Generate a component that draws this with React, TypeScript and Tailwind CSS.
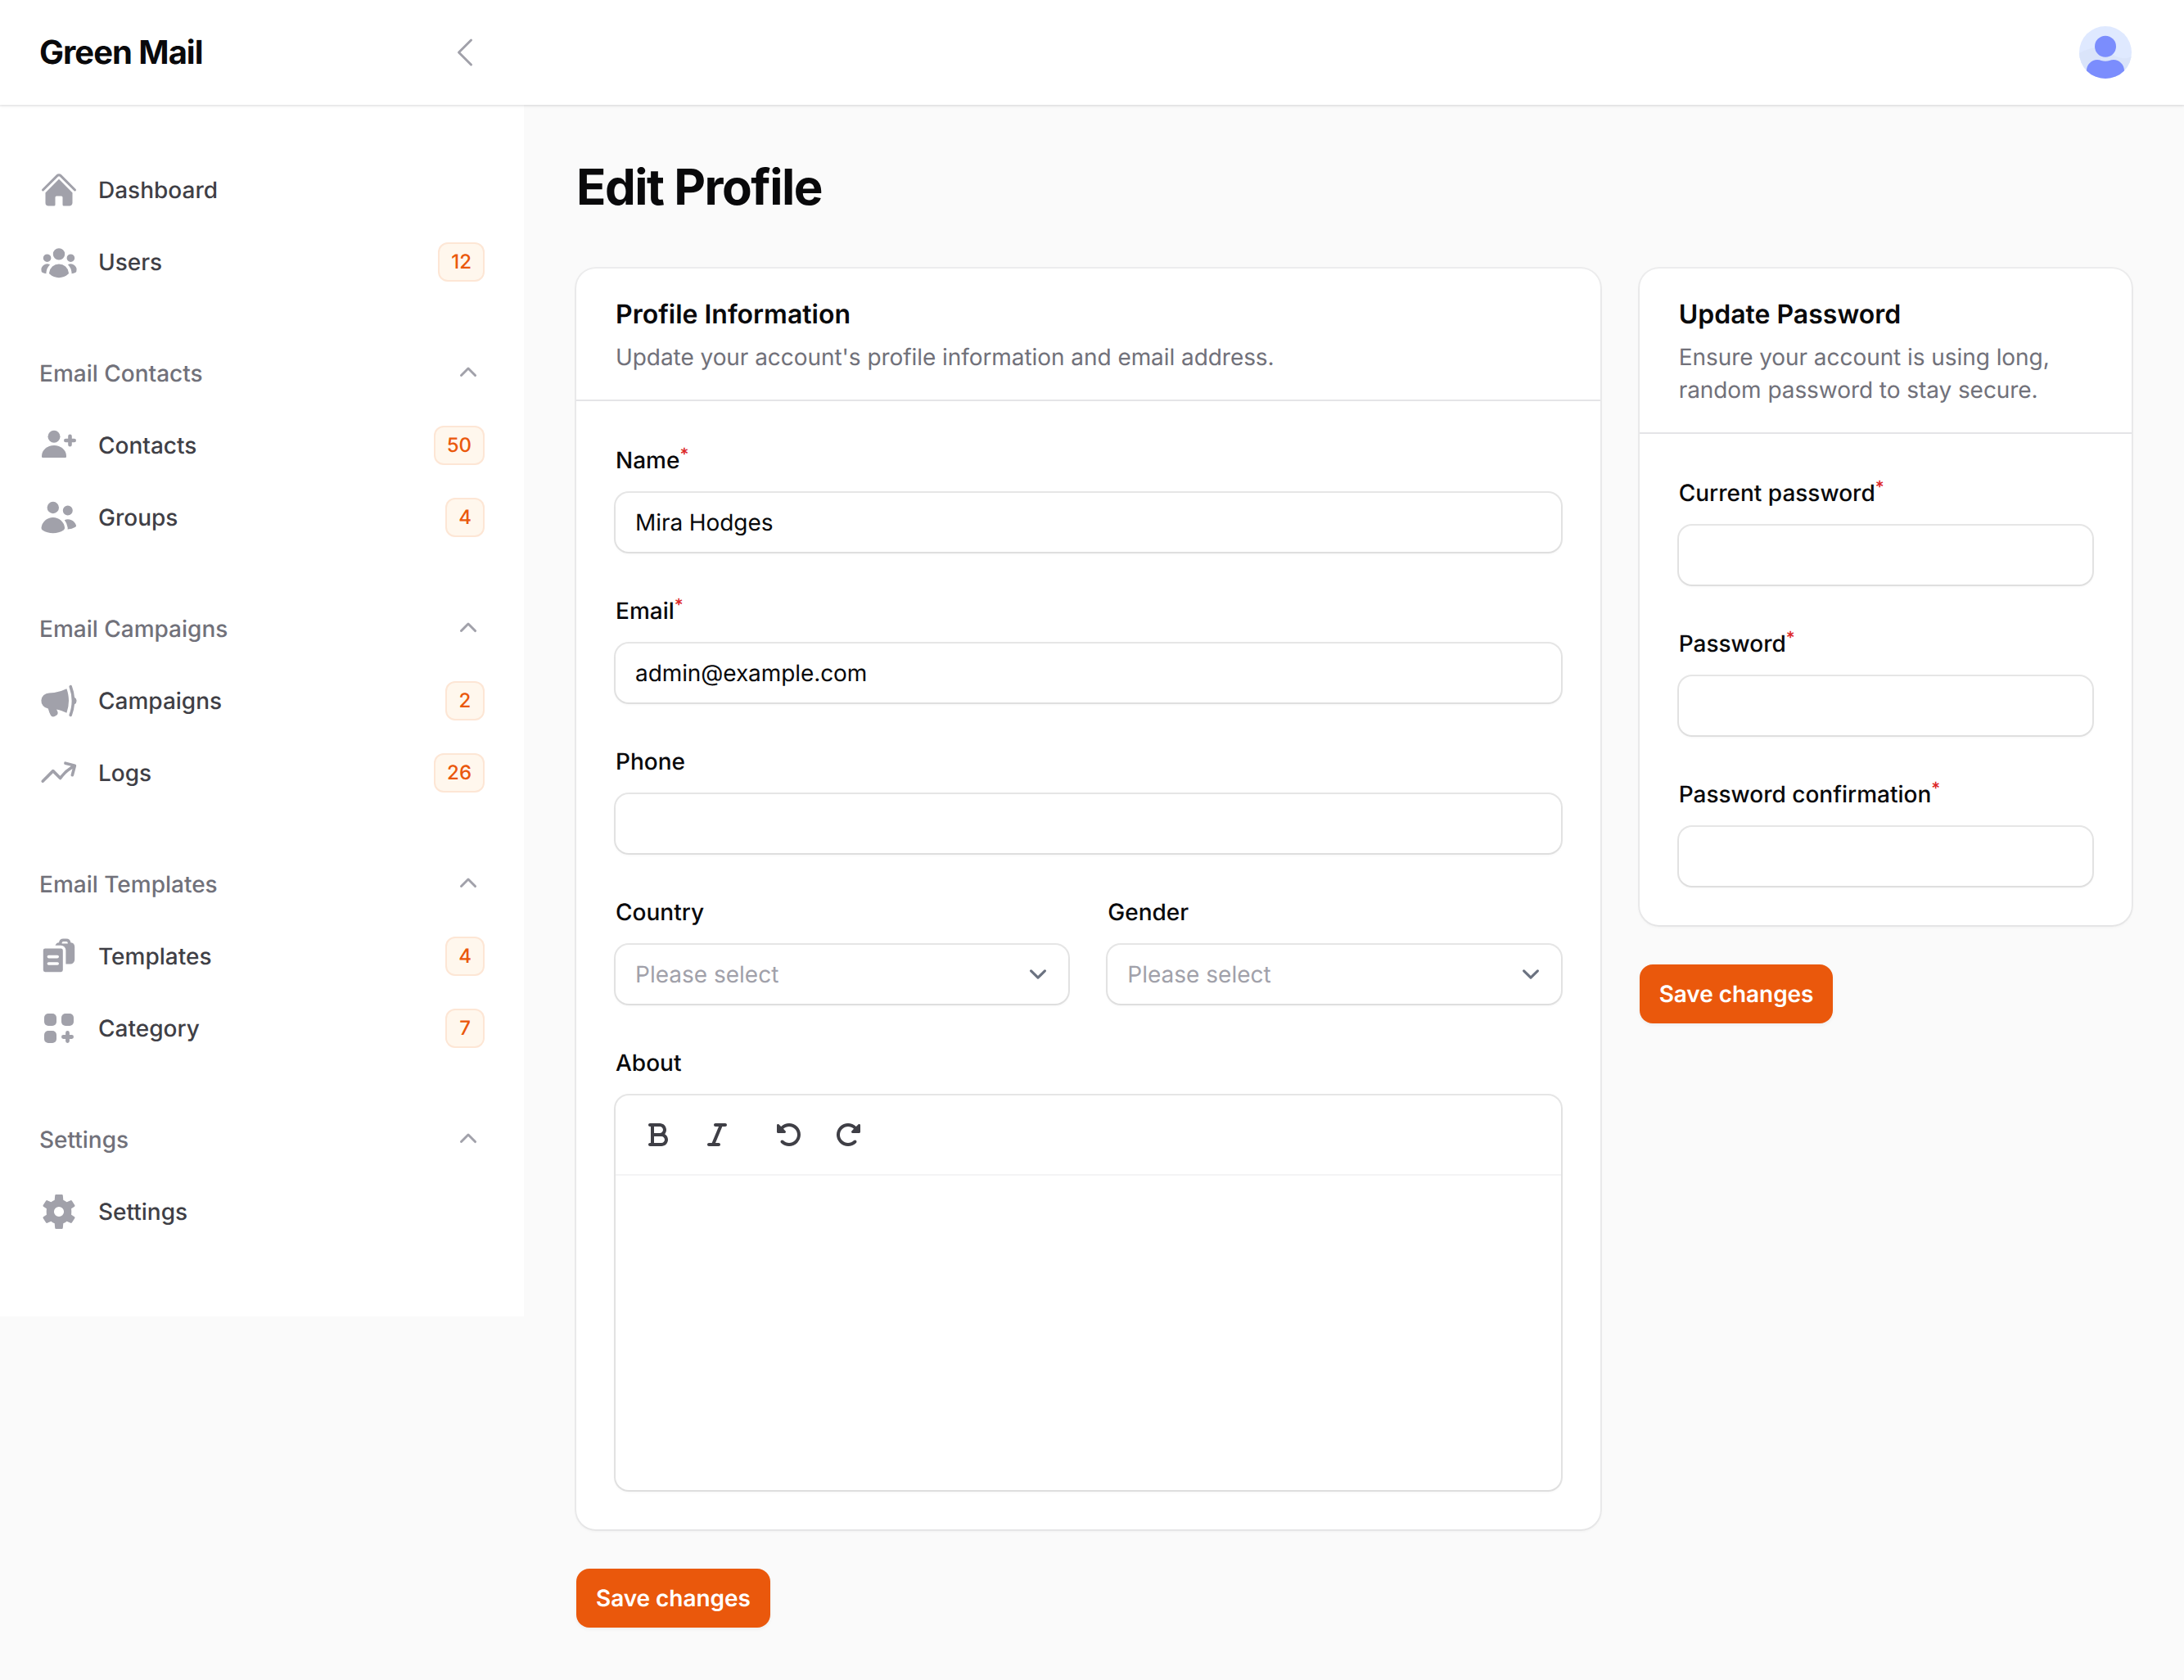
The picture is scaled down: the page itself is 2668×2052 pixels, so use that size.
import type { ComponentType, ReactNode } from 'react';
import { FaBold, FaItalic, FaRotateLeft, FaRotateRight } from 'react-icons/fa6';
import {
  HiHome,
  HiMiniArrowTrendingUp,
  HiMiniChevronUp,
  HiMiniClipboardDocumentList,
  HiMiniMegaphone,
  HiMiniUserGroup,
  HiMiniUsers,
  HiOutlineChevronLeft,
} from 'react-icons/hi2';

type IconProps = { className?: string };
type NavItem = { icon: ComponentType<IconProps>; label: string; badge?: number };
type NavGroup = { label?: string; items: NavItem[] };

function UserAddIcon({ className }: IconProps) {
  return (
    <svg viewBox="0 0 48 48" className={className} fill="currentColor">
      <circle cx="18" cy="13.3" r="7.5" />
      <path d="M18 24c8.3 0 15 5.6 15 13v.4c0 1-.6 1.6-1.6 1.6H4.6C3.6 39 3 38.4 3 37.4V37c0-7.4 6.7-13 15-13Z" />
      <path d="M37.5 12.8v10.4M32.3 18h10.4" stroke="currentColor" strokeWidth="4.6" strokeLinecap="round" />
    </svg>
  );
}

function GridAddIcon({ className }: IconProps) {
  return (
    <svg viewBox="0 0 48 48" className={className} fill="currentColor">
      <rect x="6" y="6" width="15" height="15" rx="5" />
      <rect x="27" y="6" width="15" height="15" rx="5" />
      <rect x="6" y="27" width="15" height="15" rx="5" />
      <path d="M34.5 29.4v10.2M29.4 34.5h10.2" stroke="currentColor" strokeWidth="4.8" strokeLinecap="round" />
    </svg>
  );
}

function GearIcon({ className }: IconProps) {
  return (
    <svg viewBox="0 0 48 48" className={className} fill="currentColor">
      <path
        fillRule="evenodd"
        d="M20.5 3h7q1.2 0 1.3 1.2l.5 5.6Q31.8 10.8 33.6 12.3L38.2 10.2Q39.3 9.8 39.9 10.8L43.3 16Q43.9 17.1 43 17.8L39.1 20.3Q39.5 24 39.1 27.7L43 30.2Q43.9 30.9 43.3 32L39.9 37.2Q39.3 38.2 38.2 37.8L33.6 35.7Q31.8 37.2 29.3 38.2L28.8 43.8Q28.7 45 27.5 45H20.5Q19.3 45 19.2 43.8L18.7 38.2Q16.2 37.2 14.4 35.7L9.8 37.8Q8.7 38.2 8.1 37.2L4.7 32Q4.1 30.9 5 30.2L8.9 27.7Q8.5 24 8.9 20.3L5 17.8Q4.1 17.1 4.7 16L8.1 10.8Q8.7 9.8 9.8 10.2L14.4 12.3Q16.2 10.8 18.7 9.8L19.2 4.2Q19.3 3 20.5 3ZM24 30.1A6.1 6.1 0 1 0 24 17.9A6.1 6.1 0 0 0 24 30.1Z"
      />
    </svg>
  );
}

const navigation: NavGroup[] = [
  {
    items: [
      { icon: HiHome, label: 'Dashboard' },
      { icon: HiMiniUserGroup, label: 'Users', badge: 12 },
    ],
  },
  {
    label: 'Email Contacts',
    items: [
      { icon: UserAddIcon, label: 'Contacts', badge: 50 },
      { icon: HiMiniUsers, label: 'Groups', badge: 4 },
    ],
  },
  {
    label: 'Email Campaigns',
    items: [
      { icon: HiMiniMegaphone, label: 'Campaigns', badge: 2 },
      { icon: HiMiniArrowTrendingUp, label: 'Logs', badge: 26 },
    ],
  },
  {
    label: 'Email Templates',
    items: [
      { icon: HiMiniClipboardDocumentList, label: 'Templates', badge: 4 },
      { icon: GridAddIcon, label: 'Category', badge: 7 },
    ],
  },
  {
    label: 'Settings',
    items: [{ icon: GearIcon, label: 'Settings' }],
  },
];

const toolbar = [
  [
    { icon: FaBold, title: 'Bold' },
    { icon: FaItalic, title: 'Italic' },
  ],
  [
    { icon: FaRotateLeft, title: 'Undo' },
    { icon: FaRotateRight, title: 'Redo' },
  ],
];

function Avatar() {
  return (
    <svg viewBox="0 0 64 64" className="size-16">
      <defs>
        <clipPath id="avatar">
          <circle cx="32" cy="32" r="32" />
        </clipPath>
      </defs>
      <g clipPath="url(#avatar)">
        <rect width="64" height="64" fill="#dfe9ff" />
        <path d="M0 33c7-4 13-6 20-7l22 9c6 4 14 6 22 2v27H0z" fill="#dae4fa" />
        <circle cx="32" cy="24.8" r="13" fill="#7b8dfd" />
        <path d="M9 54c0-7 6-13 13-13 4 0 6 1.8 10 1.8S38 41 42 41c7 0 13 6 13 13v10H9z" fill="#7b8dfd" />
      </g>
    </svg>
  );
}

function Topbar() {
  return (
    <header className="relative z-10 flex h-32 items-center bg-white shadow-[0_2px_4px_rgb(0_0_0/0.05)] ring-2 ring-[#09090b]/5">
      <div className="flex w-[640px] items-center justify-between px-12">
        <span className="text-[40px] leading-10 font-bold tracking-tight">Green Mail</span>
        <button type="button" aria-label="Collapse sidebar">
          <HiOutlineChevronLeft className="size-12 text-[#a1a1aa]" />
        </button>
      </div>
      <div className="ml-auto pr-16">
        <Avatar />
      </div>
    </header>
  );
}

function Sidebar() {
  return (
    <aside className="h-[1480px] w-[640px] shrink-0 bg-white px-12 py-16">
      <nav className="flex flex-col gap-14">
        {navigation.map((group, index) => (
          <div key={index} className="flex flex-col gap-2">
            {group.label && (
              <div className="flex h-20 items-center justify-between">
                <span className="text-[28px] leading-[48px] font-medium text-[#71717a]">{group.label}</span>
                <HiMiniChevronUp className="size-10 text-[#a1a1aa]" />
              </div>
            )}
            {group.items.map(({ icon: Icon, label, badge }) => (
              <a key={label} className="flex h-20 items-center gap-6">
                <Icon className="size-12 text-[#a1a1aa]" />
                <span className="flex-1 text-[28px] leading-10 font-medium text-[#3f3f46]">{label}</span>
                {badge !== undefined && (
                  <span className="flex min-w-12 items-center justify-center rounded-xl bg-[#fff7ed] px-4 py-2 text-2xl leading-8 font-medium text-[#ea580c] ring-2 ring-[#ea580c]/10 ring-inset">
                    {badge}
                  </span>
                )}
              </a>
            ))}
          </div>
        ))}
      </nav>
    </aside>
  );
}

function Card({ title, description, children }: { title: string; description: string; children: ReactNode }) {
  return (
    <section className="rounded-3xl bg-white shadow-[0_2px_4px_rgb(0_0_0/0.05)] ring-2 ring-[#09090b]/5">
      <header className="flex flex-col gap-2 px-12 py-8">
        <h3 className="text-[32px] leading-[48px] font-semibold">{title}</h3>
        <p className="text-[28px] leading-10 tracking-[-0.06px] text-[#71717a]">{description}</p>
      </header>
      <div className="flex flex-col gap-12 border-t-2 border-[#e4e4e7] p-12">{children}</div>
    </section>
  );
}

function Field({ label, required, children }: { label: string; required?: boolean; children: ReactNode }) {
  return (
    <div className="flex flex-col gap-4">
      <label className="text-[28px] leading-[48px] font-medium">
        {label}
        {required && <sup className="text-[#dc2626]">*</sup>}
      </label>
      {children}
    </div>
  );
}

function TextInput({ value, type = 'text' }: { value?: string; type?: string }) {
  return (
    <input
      type={type}
      defaultValue={value}
      className="h-[72px] w-full rounded-2xl bg-white px-6 text-[28px] tracking-[-0.08px] shadow-[0_2px_4px_rgb(0_0_0/0.05)] ring-2 ring-[#09090b]/10 outline-none [text-rendering:geometricPrecision]"
    />
  );
}

function Select() {
  return (
    <div className="flex h-[72px] items-center justify-between rounded-2xl bg-white pr-4 pl-6 text-[28px] shadow-[0_2px_4px_rgb(0_0_0/0.05)] ring-2 ring-[#09090b]/10">
      <span className="text-[#a1a1aa]">Please select</span>
      <svg
        viewBox="0 0 20 20"
        className="size-[42px]"
        fill="none"
        stroke="#6b7280"
        strokeWidth="1.5"
        strokeLinecap="round"
        strokeLinejoin="round"
      >
        <path d="m6 8 4 4 4-4" />
      </svg>
    </div>
  );
}

function RichEditor() {
  return (
    <div className="h-[482px] rounded-2xl bg-white shadow-[0_2px_4px_rgb(0_0_0/0.05)] ring-2 ring-[#09090b]/10">
      <div className="flex gap-6 border-b-2 border-[#f4f4f5] px-5 py-4">
        {toolbar.map((group, index) => (
          <div key={index} className="flex gap-2">
            {group.map(({ icon: Icon, title }) => (
              <button key={title} type="button" title={title} className="flex size-16 items-center justify-center">
                <Icon className="size-8 text-[#3f3f46]" />
              </button>
            ))}
          </div>
        ))}
      </div>
    </div>
  );
}

function SaveButton() {
  return (
    <button
      type="button"
      className="self-start rounded-2xl bg-[#ea580c] px-6 py-4 text-[28px] leading-10 font-semibold tracking-[-0.06px] text-white shadow-[0_2px_4px_rgb(0_0_0/0.05)] [text-rendering:geometricPrecision]"
    >
      Save changes
    </button>
  );
}

export default function App() {
  return (
    <div className="min-h-screen bg-[#fafafa] font-['Inter',sans-serif] text-[#09090b] antialiased [text-rendering:geometricPrecision]">
      <Topbar />
      <div className="flex items-start">
        <Sidebar />
        <main className="flex flex-1 flex-col gap-16 px-16 pt-16">
          <h1 className="text-[60px] leading-[72px] font-bold tracking-tight [text-rendering:auto]">Edit Profile</h1>
          <div className="grid grid-cols-3 items-start gap-12">
            <form className="col-span-2 flex flex-col gap-12">
              <Card
                title="Profile Information"
                description="Update your account's profile information and email address."
              >
                <Field label="Name" required>
                  <TextInput value="Mira Hodges" />
                </Field>
                <Field label="Email" required>
                  <TextInput value="admin@example.com" />
                </Field>
                <Field label="Phone">
                  <TextInput />
                </Field>
                <div className="grid grid-cols-2 gap-12">
                  <Field label="Country">
                    <Select />
                  </Field>
                  <Field label="Gender">
                    <Select />
                  </Field>
                </div>
                <Field label="About">
                  <RichEditor />
                </Field>
              </Card>
              <SaveButton />
            </form>
            <form className="flex flex-col gap-12">
              <Card
                title="Update Password"
                description="Ensure your account is using long, random password to stay secure."
              >
                <Field label="Current password" required>
                  <TextInput type="password" />
                </Field>
                <Field label="Password" required>
                  <TextInput type="password" />
                </Field>
                <Field label="Password confirmation" required>
                  <TextInput type="password" />
                </Field>
              </Card>
              <SaveButton />
            </form>
          </div>
        </main>
      </div>
    </div>
  );
}
